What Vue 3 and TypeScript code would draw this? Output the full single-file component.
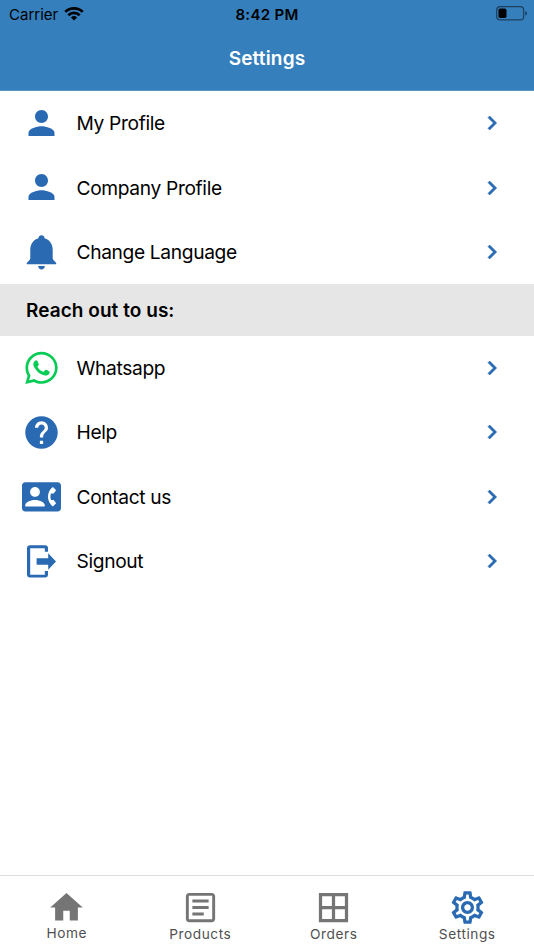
<script setup lang="ts">
interface Row {
  label: string
  icon: string
  size: string
}

interface Tab {
  label: string
  path: string
  active?: boolean
}

const person =
  'M12 12c2.21 0 4-1.79 4-4s-1.79-4-4-4-4 1.79-4 4 1.79 4 4 4zm0 2c-2.67 0-8 1.34-8 4v2h16v-2c0-2.66-5.33-4-8-4z'

const accountRows: Row[] = [
  { label: 'My Profile', icon: person, size: '0 .3 24 24' },
  { label: 'Company Profile', icon: person, size: '0 .3 24 24' },
  {
    label: 'Change Language',
    icon: 'M19.5 3.2c1.7 0 2.9 1.200 3.100 3.100C27.600 7.700 30.700 12.200 30.700 17.500v8.200c0 1.300.6 2.200 1.500 3.100l1.600 1.600c.5.6.6 1.300.3 1.900H4.900c-.3-.6-.2-1.300.3-1.900l1.600-1.600C7.700 27.900 8.300 27 8.300 25.700V17.500c0-5.300 3.100-9.800 8.100-11.200.200-1.900 1.400-3.100 3.100-3.100zM16.100 34h6.800c-.2 2-1.600 3.500-3.400 3.500s-3.200-1.500-3.400-3.500z',
    size: '0 0 39 39',
  },
]

const contactRows: Row[] = [
  {
    label: 'Whatsapp',
    icon: 'M380.9 97.1C339 55.1 283.2 32 223.9 32c-122.4 0-222 99.6-222 222 0 39.1 10.2 77.3 29.6 111L0 480l117.7-30.9c32.4 17.7 68.9 27 106.1 27h.1c122.3 0 224.1-99.6 224.1-222 0-59.3-25.2-115-67.1-157zm-157 341.6c-33.2 0-65.7-8.9-94-25.7l-6.7-4-69.8 18.3L72 359.2l-4.4-7c-18.5-29.4-28.2-63.3-28.2-98.2 0-101.7 82.8-184.5 184.6-184.5 49.3 0 95.6 19.2 130.4 54.1 34.8 34.9 56.2 81.2 56.1 130.5 0 101.8-84.9 184.6-186.6 184.6zm101.2-138.2c-5.5-2.8-32.8-16.2-37.9-18-5.1-1.9-8.8-2.8-12.5 2.8-3.700 5.6-14.3 18-17.6 21.8-3.2 3.7-6.5 4.2-12 1.4-32.6-16.3-54-29.1-75.5-66-5.7-9.8 5.7-9.1 16.3-30.3 1.8-3.7.9-6.9-.5-9.7-1.4-2.8-12.5-30.1-17.1-41.2-4.5-10.8-9.1-9.3-12.5-9.5-3.2-.2-6.9-.2-10.6-.2-3.7 0-9.7 1.4-14.8 6.9-5.1 5.6-19.4 19-19.4 46.3 0 27.3 19.9 53.7 22.6 57.4 2.8 3.7 39.1 59.7 94.8 83.8 35.2 15.2 49 16.5 66.6 13.9 10.7-1.6 32.8-13.4 37.4-26.4 4.6-13 4.6-24.1 3.2-26.4-1.3-2.5-5-3.900-10.500-6.600z',
    size: '-46 -20 540 540',
  },
  {
    label: 'Help',
    icon: 'M12 2C6.48 2 2 6.48 2 12s4.48 10 10 10 10-4.48 10-10S17.52 2 12 2zm1 17h-2v-2h2v2zm2.07-7.75l-.9.92C13.45 12.9 13 13.5 13 15h-2v-.5c0-1.1.45-2.1 1.17-2.83l1.24-1.26c.37-.36.59-.86.59-1.41 0-1.1-.9-2-2-2s-2 .9-2 2H8c0-2.21 1.79-4 4-4s4 1.79 4 4c0 .88-.36 1.68-.93 2.25z',
    size: '0 0 24 24',
  },
  {
    label: 'Contact us',
    icon: 'M22 3H2C.9 3 0 3.9 0 5v14c0 1.1.9 2 2 2h20c1.1 0 1.99-.9 1.99-2L24 5c0-1.1-.9-2-2-2zM8 6c1.66 0 3 1.34 3 3s-1.34 3-3 3-3-1.34-3-3 1.34-3 3-3zm6 12H2v-1c0-2 4-3.1 6-3.1s6 1.1 6 3.1v1zm3.85-4h1.64L21 16l-1.99 1.99c-1.31-.98-2.28-2.38-2.73-3.99-.18-.64-.28-1.31-.28-2s.1-1.36.28-2c.45-1.62 1.42-3.01 2.73-3.99L21 8l-1.51 2h-1.64c-.22.63-.35 1.3-.35 2s.13 1.37.35 2z',
    size: '0 -.2 24 24',
  },
  {
    label: 'Signout',
    icon: 'M8 3.200h15a3 3 0 0 1 3 3V9.800h-3.200V6.200H8.200v26.600h14.600v-3.800H26v3.600a3 3 0 0 1-3 3H8a3 3 0 0 1-3-3V6.200a3 3 0 0 1 3-3zM14.600 16.300h11.600v-5.100L34 19.500l-7.800 8.300v-5.100H14.600z',
    size: '0 0 39 39',
  },
]

const tabs: Tab[] = [
  { label: 'Home', path: 'M10 20v-6h4v6h5v-8h3L12 3 2 12h3v8z' },
  {
    label: 'Products',
    path: 'M19 3H5c-1.100 0-2 .9-2 2v14c0 1.100.9 2 2 2h14c1.100 0 2-.9 2-2V5c0-1.100-.9-2-2-2zm.2 16.200H4.800V4.800h14.400zM7 7h10v1.900H7zM7 11h10v1.900H7zM7 15h7v1.900H7z',
  },
  {
    label: 'Orders',
    path: 'M3 3v18h18V3H3zm8 16H5v-6h6v6zm0-8H5V5h6v6zm8 8h-6v-6h6v6zm0-8h-6V5h6v6z',
  },
  {
    label: 'Settings',
    active: true,
    path: 'M19.43 12.98c.04-.32.07-.64.07-.98s-.03-.66-.07-.98l2.11-1.65c.19-.15.24-.42.12-.64l-2-3.46c-.09-.16-.26-.25-.44-.25-.06 0-.12.01-.17.03l-2.49 1c-.52-.4-1.08-.73-1.69-.98l-.38-2.65C14.46 2.18 14.25 2 14 2h-4c-.25 0-.46.18-.49.42l-.38 2.65c-.61.25-1.17.59-1.69.98l-2.49-1c-.06-.02-.12-.03-.18-.03-.17 0-.34.09-.43.25l-2 3.46c-.13.22-.07.49.12.64l2.11 1.65c-.04.32-.07.65-.07.98s.03.66.07.98l-2.11 1.65c-.19.15-.24.42-.12.64l2 3.46c.09.16.26.25.44.25.06 0 .12-.01.17-.03l2.49-1c.52.4 1.08.73 1.69.98l.38 2.65c.03.24.24.42.49.42h4c.25 0 .46-.18.49-.42l.38-2.65c.61-.25 1.17-.59 1.69-.98l2.49 1c.06.02.12.03.18.03.17 0 .34-.09.43-.25l2-3.46c.12-.22.07-.49-.12-.64l-2.11-1.65zm-1.98-1.71c.04.31.05.52.05.73 0 .21-.02.43-.05.73l-.14 1.13.89.7 1.08.84-.7 1.21-1.27-.51-1.04-.42-.9.68c-.43.32-.84.56-1.25.73l-1.06.43-.16 1.13-.2 1.35h-1.4l-.19-1.35-.16-1.13-1.06-.43c-.43-.18-.83-.41-1.23-.71l-.91-.7-1.06.43-1.27.51-.7-1.21 1.08-.84.89-.7-.14-1.13c-.03-.31-.05-.54-.05-.74s.02-.43.05-.73l.14-1.13-.89-.7-1.08-.84.7-1.21 1.27.51 1.04.42.9-.68c.43-.32.84-.56 1.25-.73l1.06-.43.16-1.13.2-1.35h1.39l.19 1.35.16 1.13 1.06.43c.43.18.83.41 1.23.71l.91.7 1.06-.43 1.27-.51.7 1.21-1.07.85-.89.7.14 1.13zM12 8c-2.21 0-4 1.79-4 4s1.79 4 4 4 4-1.79 4-4-1.79-4-4-4zm0 6c-1.1 0-2-.9-2-2s.9-2 2-2 2 .9 2 2-.9 2-2 2z',
  },
]

const groups = [
  { title: '', rows: accountRows },
  { title: 'Reach out to us:', rows: contactRows },
]
</script>

<template>
  <div class="screen">
    <header class="header">
      <div class="status">
        <div class="carrier">
          <span class="carrier-name">Carrier</span>
          <svg class="wifi" viewBox="0 0 20 15">
            <g fill="none" stroke="currentColor" stroke-width="2.7">
              <path d="M1.200 5.900A12.600 12.600 0 0 1 18.800 5.900" />
              <path d="M4.300 9.200A8.200 8.200 0 0 1 15.700 9.200" />
            </g>
            <path d="M10 14.600L6.900 11.500A4.500 4.500 0 0 1 13.100 11.500z" fill="currentColor" />
          </svg>
        </div>
        <span class="time">8:42 PM</span>
        <svg class="battery" viewBox="0 0 32 15">
          <rect x=".7" y=".7" width="27" height="13.200" rx="3.500" fill="none" stroke="#000" stroke-opacity=".5" stroke-width="1.200" />
          <rect x="2.500" y="2.500" width="8" height="9.600" rx="1.800" />
          <path d="M29.300 5c1.200.4 1.700 1.300 1.700 2.300s-.5 1.900-1.700 2.300z" fill-opacity=".5" />
        </svg>
      </div>
      <h1 class="title">Settings</h1>
    </header>

    <main class="content">
      <section v-for="(group, i) in groups" :key="i">
        <h2 v-if="group.title" class="group-title"><span>{{ group.title }}</span></h2>
        <ul class="rows">
          <li v-for="row in group.rows" :key="row.label" class="row">
            <svg class="row-icon" :class="{ whatsapp: row.label === 'Whatsapp' }" :viewBox="row.size">
              <path :d="row.icon" />
            </svg>
            <span class="row-label">{{ row.label }}</span>
            <svg class="chevron" viewBox="0 0 24 24">
              <path d="M10 6L8.590 7.410 13.170 12l-4.580 4.590L10 18l6-6z" />
            </svg>
          </li>
        </ul>
      </section>
    </main>

    <nav class="tabs">
      <div v-for="tab in tabs" :key="tab.label" class="tab" :class="{ active: tab.active, home: tab.label === 'Home' }">
        <svg class="tab-icon" viewBox="0 0 24 24"><path fill-rule="evenodd" :d="tab.path" /></svg>
        <span class="tab-label">{{ tab.label }}</span>
      </div>
    </nav>
  </div>
</template>

<style>
body {
  background: #fff;
}
</style>

<style scoped>
.screen {
  display: flex;
  flex-direction: column;
  height: 950px;
  overflow: hidden;
  font-family: Inter, "Liberation Sans", sans-serif;
  color: #000;
}
.header {
  box-sizing: border-box;
  height: 91px;
  background: #367fbd;
  border-bottom: 1px solid #5c95c7;
}
.status {
  display: grid;
  grid-template-columns: 1fr auto 1fr;
  align-items: center;
  height: 27px;
  padding: 0 6px 0 9px;
}
.carrier {
  display: flex;
  align-items: center;
  gap: 6px;
  font-size: 15px;
}
.carrier-name {
  padding-top: 1px;
}
.wifi {
  width: 20px;
  height: 15px;
}
.time {
  padding-top: 1px;
  margin-left: -3px;
  font-size: 15px;
  font-weight: 600;
  letter-spacing: 0.300px;
}
.battery {
  width: 32px;
  height: 15px;
  justify-self: end;
}
.title {
  margin: 0;
  padding-top: 19px;
  color: #fff;
  font-size: 19px;
  line-height: 25px;
  font-weight: 600;
  letter-spacing: 0.150px;
  text-align: center;
}
.content {
  flex: 1;
}
.rows {
  margin: 0;
  padding: 0;
  list-style: none;
}
.row {
  display: flex;
  align-items: center;
  height: 64.400px;
  padding: 0 28px 0 22px;
}
.row-icon {
  width: 39px;
  height: 39px;
  fill: #2a6ab3;
}
.row-icon.whatsapp {
  fill: #06cc55;
}
.row-label {
  flex: 1;
  margin-left: 15.500px;
  padding-top: 0.200px;
  font-size: 19.200px;
  letter-spacing: -0.350px;
}
.chevron {
  width: 28px;
  height: 28px;
  fill: #2a6ab3;
  stroke: #2a6ab3;
  stroke-width: 0.500px;
}
.group-title {
  display: flex;
  align-items: center;
  height: 51.500px;
  margin: 0;
  padding-left: 26px;
  background: #e6e6e6;
  font-size: 19px;
  font-weight: 600;
  letter-spacing: 0.050px;
}
.group-title span {
  padding-top: 1px;
}
.tabs {
  display: grid;
  grid-template-columns: repeat(4, 1fr);
  box-sizing: border-box;
  height: 75px;
  border-top: 1px solid #dedede;
}
.tab {
  display: flex;
  flex-direction: column;
  align-items: center;
  padding-top: 11.500px;
  color: #505050;
}
.tab-icon {
  width: 39px;
  height: 39px;
  fill: #757575;
}
.active .tab-icon {
  fill: #2a6ab3;
}
.tab-label {
  margin-top: -0.500px;
  font-size: 13.700px;
  line-height: 16px;
  letter-spacing: 0.550px;
}
.home .tab-label {
  margin-top: -1.500px;
}
</style>
